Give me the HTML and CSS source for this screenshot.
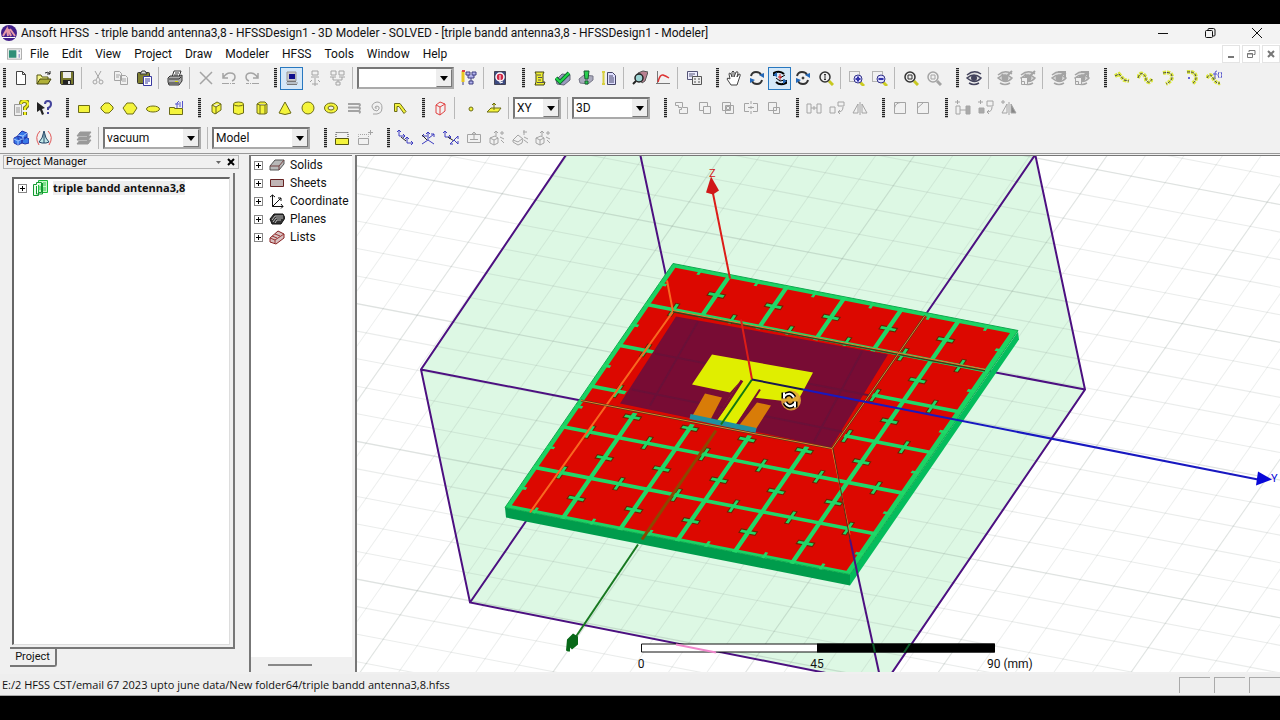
FILE: index.html
```html
<!DOCTYPE html>
<html lang="en">
<head>
<meta charset="utf-8">
<title>Ansoft HFSS - triple bandd antenna3,8</title>
<link rel="stylesheet" href="styles.css">
</head>
<body>
<svg class="defs" aria-hidden="true">
  <symbol id="swap" viewBox="0 0 16 16"><path d="M2 6q1-4 5-4 4 0 5 3M3 11q1 3 5 3t5-4" fill="none" stroke="currentColor" stroke-width="2"/><path d="M10 5l5-2v5zM6 10l-5 3V8z" fill="#2468b8" stroke="none"/></symbol>
  <symbol id="lens" viewBox="0 0 16 16"><path d="M11 11l4 4" stroke="#c8c820" stroke-width="3"/><circle cx="7" cy="7" r="5" fill="#eee" stroke="currentColor" stroke-width="1.5"/></symbol>
  <symbol id="eye" viewBox="0 0 16 16"><path d="M1 5q7-6 14-1M1 8q7-6 14 0-6 7-14 0z" fill="#ddd" stroke="currentColor" stroke-width="1.5"/><circle cx="8" cy="8" r="3" fill="currentColor"/><path d="M3 13q5 3 10 0" fill="none" stroke="currentColor" stroke-width="1.5"/></symbol>
  <symbol id="axis" viewBox="0 0 8 8"><path d="M2 0v6h6M0 2l2-2 2 2M6 4l2 2-2 2" fill="none" stroke="currentColor"/></symbol>
  <symbol id="cube" viewBox="0 0 16 16"><path d="M1 8l5-2 3 2v5l-4 2-4-2zM1 8l4 2v5M5 10l4-2M7 6V1M5 3l2-2 2 2M11 3h4M13 1v4M11 7l4 2M12 10l3 3" fill="none" stroke="currentColor"/></symbol>
</svg>
<div class="app">
  <header class="titlebar">
    <svg class="logo" viewBox="0 0 18 18"><circle cx="9" cy="9" r="8" fill="#42208a"/><path d="M3 12l4-7 1 7M8 5l3 7M10 5l5 7" fill="none" stroke="#e89aa8" stroke-width="2"/><path d="M2 13.500h13" stroke="#fff"/></svg>
    <h1>Ansoft HFSS&nbsp; - triple bandd antenna3,8 - HFSSDesign1 - 3D Modeler - SOLVED - [triple bandd antenna3,8 - HFSSDesign1 - Modeler]</h1>
    <div class="winbtns">
      <button aria-label="Minimize"><svg viewBox="0 0 12 12"><path d="M1 6.500h10"/></svg></button>
      <button aria-label="Restore"><svg viewBox="0 0 12 12"><rect x="1.500" y="3.500" width="7" height="7" rx="1"/><path d="M4 3.500V2.500q0-1 1-1h4.500q1.500 0 1.500 1.500V8q0 1-1 1H9"/></svg></button>
      <button aria-label="Close"><svg viewBox="0 0 12 12"><path d="M1 1l10 10M11 1L1 11"/></svg></button>
    </div>
  </header>
  <nav class="menubar">
    <svg class="docicon" viewBox="0 0 16 14"><rect x=".5" y="1.500" width="15" height="11" fill="#f4f4f4" stroke="#aaa"/><rect x="2" y="3" width="8" height="8" fill="#2f8f78"/><path d="M13 3v2M13 7v4" stroke="#7777bb"/></svg>
    <button>File</button><button>Edit</button><button>View</button><button>Project</button><button>Draw</button><button>Modeler</button><button>HFSS</button><button>Tools</button><button>Window</button><button>Help</button>
    <div class="mdibtns">
      <button aria-label="Minimize document"><svg viewBox="0 0 10 10"><path d="M2 8h6" stroke-width="2"/></svg></button>
      <button aria-label="Restore document"><svg viewBox="0 0 10 10"><path d="M3 3V1.500h6v4H7.500M1.500 4.500h5v4h-5zM1 5h6"/></svg></button>
      <button aria-label="Close document"><svg viewBox="0 0 10 10"><path d="M2 2l6 6M8 2L2 8" stroke-width="2"/></svg></button>
    </div>
  </nav>

  <div class="toolbars">
    <div class="row">
      <i class="grip first"></i>
      <button aria-label="New"><svg viewBox="0 0 16 16"><path d="M3.500 1.500h6l3 3v10h-9zM9.500 1.500v3h3" fill="#fff" stroke="#444"/></svg></button>
      <button aria-label="Open"><svg viewBox="0 0 16 16"><path d="M1 14V5h4l1 2h6v2" fill="#f4f48a" stroke="#555510"/><path d="M1 14l3-5h11l-3 5z" fill="#b0b038" stroke="#444410"/><path d="M9 3q3-2 5 1M14 1v3h-3" fill="none" stroke="#222"/></svg></button>
      <button aria-label="Save"><svg viewBox="0 0 16 16"><path d="M1.500 1.500h13v13h-12l-1-1z" fill="#77772c" stroke="#333"/><path d="M4 2h8v6H4z" fill="#eee"/><path d="M4 10h8v4H4z" fill="#222"/><path d="M9 11h2v3H9z" fill="#ddd"/></svg></button>
      <i class="sep"></i>
      <button aria-label="Cut"><svg class="gy" viewBox="0 0 16 16"><path d="M5 1l5 9M11 1L6 10"/><circle cx="5" cy="12" r="2"/><circle cx="11" cy="12" r="2"/></svg></button>
      <button aria-label="Copy"><svg class="gy" viewBox="0 0 16 16"><path d="M1.500 1.500h5l2 2v7h-7zM7.500 5.500h5l2 2v7h-7zM3 5h4M3 7h3M9 9h4M9 11h4"/></svg></button>
      <button aria-label="Paste"><svg viewBox="0 0 16 16"><rect x="1.500" y="2.500" width="12" height="11" rx="1" fill="#808030" stroke="#333"/><path d="M4 4l2-3h3l2 3z" fill="#ddd" stroke="#333"/><path d="M7.500 6.500h8v9h-8zM9 9h5M9 11h5M9 13h3" fill="#fff" stroke="#3838a0"/></svg></button>
      <i class="sep"></i>
      <button aria-label="Print"><svg viewBox="0 0 16 16"><path d="M5 7l2-6h7l-2 6M8 3h4M7 5h4" fill="#fff" stroke="#333"/><path d="M1 8l2-2h10l2-1v6l-3 4H2l-1-3z" fill="#aaa" stroke="#333"/><path d="M2 9h10l2-2M2 13h10" fill="none" stroke="#333"/><path d="M8 11.500h3" stroke="#dd0"/></svg></button>
      <i class="sep"></i>
      <button aria-label="Delete"><svg class="gy" viewBox="0 0 16 16"><path d="M2 2l12 12M14 2L2 14" stroke-width="1.500"/></svg></button>
      <button aria-label="Undo"><svg class="gy" viewBox="0 0 16 16"><path d="M2 8q3-5 7-5 5 0 5 4 0 3-3 4M2 3v5h5" stroke-width="1.500"/><path d="M1 13.500h13" stroke-dasharray="7 1 1 1"/></svg></button>
      <button aria-label="Redo"><svg class="gy" viewBox="0 0 16 16"><path d="M14 8q-3-5-7-5-5 0-5 4 0 3 3 4M14 3v5H9" stroke-width="1.500"/><path d="M15 13.500H2" stroke-dasharray="7 1 1 1"/></svg></button>
      <i class="grip"></i>
      <button class="on" aria-label="Local machine"><svg viewBox="0 0 16 16"><path d="M3 2h9v9H3zM2 13h12" fill="#ccc" stroke="#999"/><path d="M5 4h6v5H5z" fill="#10108c"/><path d="M3 11.500h9M3 14.500h10" stroke="#777"/></svg></button>
      <button aria-label="Remote machine"><svg class="gy" viewBox="0 0 16 16"><path d="M5 1h6v4H5zM4 7h8M8 8v4M5 10l-2 2M11 10l2 2M5 14h6M8 12v4"/></svg></button>
      <button aria-label="Distributed"><svg class="gy" viewBox="0 0 16 16"><path d="M1 1h5v4H1zM9 1h5v4H9zM0 7h6M9 7h6M3 7v3h9V7M8 10v2M6 12h4v3H6z"/></svg></button>
      <i class="sep"></i>
      <label class="combo w97"><select aria-label="Analysis configuration"><option></option></select><span class="arrow"></span></label>
      <button aria-label="Edit configuration"><svg viewBox="0 0 16 16"><path d="M2 1v11" stroke="#e8c820" stroke-width="3"/><path d="M1 1h3" stroke="#d44" stroke-width="2"/><path d="M2 12v3M5 2h4v3H5zM11 2h4v3h-4zM7 5v3h6V5M10 8v3M8 11h4v3H8z" fill="#b4b4ee" stroke="#3c3c80"/></svg></button>
      <i class="sep"></i>
      <button aria-label="Queue"><svg viewBox="0 0 16 16"><path d="M2.500 1.500h11v13h-11z" fill="#3c4a80" stroke="#445"/><circle cx="8" cy="7" r="4" fill="#d02848" stroke="#fff" stroke-width="1.500"/><path d="M8 5v8l3-1" stroke="#fff" fill="none"/></svg></button>
      <i class="grip"></i>
      <button aria-label="Setup"><svg viewBox="0 0 16 16"><path d="M3 2h9l-1 2v8h2l-1 3H3l1-3V4z" fill="#f0f030" stroke="#444410"/><path d="M5 5h4M6 7.500h4M6 10h3M5 12.500h7" stroke="#555"/></svg></button>
      <button aria-label="Validate"><svg viewBox="0 0 16 16"><path d="M1 10l6-6 8 1v5l-6 5-7-1z" fill="#9a9ac0" stroke="#667"/><path d="M1 8l4 4 9-9" fill="none" stroke="#163" stroke-width="4"/><path d="M1 8l4 4 9-9" fill="none" stroke="#20d848" stroke-width="2"/></svg></button>
      <button aria-label="Analyze"><svg viewBox="0 0 16 16"><path d="M1 9l5-4 9 1v4l-5 4-8-1z" fill="#aaaabc" stroke="#778"/><path d="M6 1h5l-1 8H7zM7 11h3v3H7z" fill="#28d050" stroke="#185c30"/></svg></button>
      <button aria-label="Solution data"><svg viewBox="0 0 16 16"><path d="M1 2h3M2.500 2v12M1 14h3" fill="none" stroke="#d8d040" stroke-width="2"/><path d="M6.500 2.500h5l3 3v9h-8zM8 6h4M8 8h5M8 10h5M8 12h5" fill="#ddf" stroke="#446"/></svg></button>
      <i class="sep"></i>
      <button aria-label="Fields"><svg viewBox="0 0 16 16"><path d="M6 3l5-2 5 1-3 9-3 2z" fill="#b88090" stroke="#555"/><circle cx="7" cy="8" r="4" fill="#9cd4d4" stroke="#222" stroke-width="1.500"/><path d="M4 11l-3 3" stroke="#222" stroke-width="2"/></svg></button>
      <button aria-label="Plot"><svg viewBox="0 0 16 16"><path d="M2.500 1v13M1 13.500h14" stroke="#777"/><path d="M3 12q2-8 5-7t6 3" fill="none" stroke="#d33" stroke-width="1.500"/></svg></button>
      <i class="sep"></i>
      <button aria-label="Reports"><svg viewBox="0 0 16 16"><path d="M1.500 1.500h10v8h-10zM3 4h6M3 6h4" fill="#eef" stroke="#557"/><path d="M6.500 6.500h9v8h-9zM8 9h2M12 9h2M8 12h2M12 12h2" fill="#eee" stroke="#555"/></svg></button>
      <i class="grip"></i>
      <button aria-label="Pan"><svg viewBox="0 0 16 16"><path d="M5 15L1 9q0-2 3 0L3 4q0-2 2 0l1 3V2q1-2 2 0v5l2-5q2-1 2 1l-1 4 2-3q2 0 1 2l-3 9z" fill="#fff" stroke="#444"/></svg></button>
      <button aria-label="Rotate"><svg class="dk"><use href="#swap"/></svg></button>
      <button class="on" aria-label="Rotate around axis"><svg class="bk" viewBox="0 0 16 16"><path d="M2 6V3q6-3 10 1M14 10v3q-6 3-10-1" fill="none" stroke="#000" stroke-width="2"/><path d="M4 8l4 3 5-1M8 8l5-3" stroke="#000" fill="none"/><path d="M8 4v6M6 7h4" stroke="#d22"/><path d="M1 5l4-3v5zM15 11l-4 3V9z" fill="#2468b8"/></svg></button>
      <button aria-label="Spin"><svg class="dk" viewBox="0 0 16 16"><use href="#swap"/><circle cx="8" cy="8" r="1" fill="#333"/></svg></button>
      <button aria-label="Zoom"><svg class="dk" viewBox="0 0 16 16"><use href="#lens"/><path d="M7 4v6M6 5l1-1 1 1M6 9l1 1 1-1"/></svg></button>
      <i class="sep"></i>
      <button aria-label="Zoom in"><svg viewBox="0 0 16 16"><path d="M.5 1.500h10v10H.5z" fill="none" stroke="#777" stroke-dasharray="1 1"/><path d="M11 12l4 4" stroke="#cc2" stroke-width="3"/><circle cx="9" cy="9" r="4" fill="#ddf" stroke="#338"/><path d="M6.500 9h5M9 6.500v5" stroke="#33a" stroke-width="2"/></svg></button>
      <button aria-label="Zoom out"><svg viewBox="0 0 16 16"><path d="M.5 1.500h10v10H.5z" fill="none" stroke="#777" stroke-dasharray="1 1"/><path d="M11 12l4 4" stroke="#cc2" stroke-width="3"/><circle cx="9" cy="9" r="4" fill="#ddf" stroke="#338"/><path d="M6.500 9h5" stroke="#33a" stroke-width="2"/></svg></button>
      <i class="sep"></i>
      <button aria-label="Fit all"><svg class="dk" viewBox="0 0 16 16"><use href="#lens"/><path d="M5 5h4v4H5z"/></svg></button>
      <button aria-label="Fit selection"><svg class="gy" viewBox="0 0 16 16"><path d="M11 11l4 4" stroke-width="3"/><circle cx="7" cy="7" r="5" stroke-width="1.500"/><path d="M5 5h4v4H5z"/></svg></button>
      <i class="grip"></i>
      <button aria-label="Visibility"><svg class="nv"><use href="#eye"/></svg></button>
      <i class="sep"></i>
      <button aria-label="Hide selection"><svg class="gy" viewBox="0 0 16 16"><use href="#eye"/><path d="M5 4l3 4 7-7" stroke-width="2"/></svg></button>
      <button aria-label="Hide in view"><svg class="gy" viewBox="0 0 16 16"><use href="#eye"/><path d="M5 4l3 4 7-7" stroke-width="2"/><path d="M1.500 7.500h6v7h-6zM1.500 11.500h3v3" fill="#eee"/></svg></button>
      <i class="sep"></i>
      <button aria-label="Show selection"><svg class="gy" viewBox="0 0 16 16"><use href="#eye"/><path d="M7 2h7v5M14 2L9 6" stroke-width="2"/></svg></button>
      <button aria-label="Show in view"><svg class="gy" viewBox="0 0 16 16"><use href="#eye"/><path d="M7 2h7v5M14 2L9 6" stroke-width="2"/><path d="M1.500 7.500h6v7h-6zM1.500 11.500h3v3" fill="#eee"/></svg></button>
      <i class="grip"></i>
      <button aria-label="Line"><svg class="crv" viewBox="0 0 16 16"><path d="M1 6l4-2 5 6 5 1" class="y"/><path d="M1 6l4-2 5 6 5 1"/></svg></button>
      <button aria-label="Spline"><svg class="crv" viewBox="0 0 16 16"><path d="M1 8q2-6 5-4t3 6q3 5 6-1" class="y"/><path d="M1 8q2-6 5-4t3 6q3 5 6-1"/></svg></button>
      <button aria-label="Three-point arc"><svg class="crv" viewBox="0 0 16 16"><path d="M3 3q9-2 9 4 0 4-6 7" class="y"/><path d="M3 3q9-2 9 4 0 4-6 7"/></svg></button>
      <button aria-label="Center-point arc"><svg class="crv" viewBox="0 0 16 16"><path d="M4 2q9-1 9 6 0 3-4 6" class="y"/><path d="M4 2q9-1 9 6 0 3-4 6"/><circle cx="6" cy="8" r="1" fill="#33c" stroke="none"/></svg></button>
      <button aria-label="Equation curve"><svg class="crv" viewBox="0 0 16 16"><path d="M1 8q3-6 6 0t7 5" class="y"/><path d="M1 8q3-6 6 0t7 5"/><path class="fx" d="M9 9V3q0-2 2-2M7 4h4M13 2q-2 3 0 6M15 2q2 3 0 6"/></svg></button>
    </div>

    <div class="row">
      <i class="grip first"></i>
      <button aria-label="Help topics"><svg viewBox="0 0 16 16"><path d="M1.500 4.500h7v11h-7zM3 8h4M3 10h4M3 12h4" fill="#eee" stroke="#999"/><path d="M8 4q0-3 3-3 4 0 4 3 0 2-3 4v2M12 12v3" fill="none" stroke="#777718" stroke-width="4"/><path d="M8 4q0-3 3-3 4 0 4 3 0 2-3 4v2M12 12v3" fill="none" stroke="#f0f020" stroke-width="2"/></svg></button>
      <button aria-label="Context help"><svg viewBox="0 0 16 16"><path d="M1 2l8 6-3 1 2 5-2 1-2-5-3 2z" fill="#222"/><path d="M9 4q0-3 3-3t3 3-3 4v2M12 12v2" fill="none" stroke="#44449c" stroke-width="2"/></svg></button>
      <i class="grip"></i>
      <button aria-label="Rectangle"><svg class="sh" viewBox="0 0 16 16"><path d="M2.500 5.500h11v7h-11z"/></svg></button>
      <button aria-label="Circle"><svg class="sh" viewBox="0 0 16 16"><path d="M6 3h4l4 4v2l-4 4H6L2 9V7z"/></svg></button>
      <button aria-label="Polygon"><svg class="sh" viewBox="0 0 16 16"><path d="M5 3h6l4 5-4 6H5L1 8z"/></svg></button>
      <button aria-label="Ellipse"><svg class="sh" viewBox="0 0 16 16"><ellipse cx="8" cy="9" rx="6.500" ry="3"/></svg></button>
      <button aria-label="Equation surface"><svg class="sh" viewBox="0 0 16 16"><path d="M1.500 7.500h5v1h8v6h-13z"/><path d="M9 8V3l2-2M7 4h4M12 2v5M14.500 1v7" stroke="#55c" fill="none"/></svg></button>
      <i class="grip"></i>
      <button aria-label="Box"><svg class="sh" viewBox="0 0 16 16"><path d="M4 5l5-3 4 2v6l-6 4-3-2zM4 5l4 2 5-3M8 7v7"/></svg></button>
      <button aria-label="Cylinder"><svg class="sh" viewBox="0 0 16 16"><path d="M2.500 4v9q5 3 10 0V4"/><ellipse cx="7.500" cy="4" rx="5" ry="2"/></svg></button>
      <button aria-label="Regular polyhedron"><svg class="sh" viewBox="0 0 16 16"><path d="M3 4l3-2h5l2 2v9l-2 1H5l-2-1zM3 4l3 1h5l2-1M6 5v9M11 5v9"/></svg></button>
      <button aria-label="Cone"><svg class="sh" viewBox="0 0 16 16"><path d="M8 2l6 11q-6 3-12 0z"/></svg></button>
      <button aria-label="Sphere"><svg class="sh" viewBox="0 0 16 16"><circle cx="8" cy="8" r="6"/></svg></button>
      <button aria-label="Torus"><svg class="sh" viewBox="0 0 16 16"><ellipse cx="8" cy="8" rx="6.500" ry="5"/><ellipse cx="8" cy="8" rx="3" ry="2" fill="#eee"/></svg></button>
      <button aria-label="Helix"><svg class="gy" viewBox="0 0 16 16"><path d="M2 4h11q2 1 0 2M2 7.500h11q2 1 0 2M2 11h11q2 1 0 2" stroke-width="2"/></svg></button>
      <button aria-label="Spiral"><svg class="gy" viewBox="0 0 16 16"><path d="M4 14q9 1 9-6 0-6-5-6-5 1-5 5 1 4 5 4 3-2 2-4-2-2-4 0 0 2 2 1"/></svg></button>
      <button aria-label="Bondwire"><svg class="sh" viewBox="0 0 16 16"><path d="M2.500 3.500H8l6 8-2 2-5-7H5v5H2.500z"/></svg></button>
      <i class="grip"></i>
      <button aria-label="Region"><svg viewBox="0 0 16 16"><path d="M4 5l4-3 5 2v7l-5 4-4-2zM4 5l4 2 5-3M8 7v8" fill="none" stroke="#e04040"/></svg></button>
      <i class="sep"></i>
      <button aria-label="Point"><svg class="sh" viewBox="0 0 16 16"><circle cx="8" cy="9" r="2"/></svg></button>
      <button aria-label="Plane"><svg class="sh" viewBox="0 0 16 16"><path d="M1 12l4-4h10l-3 4zM8 10V3M6 5l2-2 2 2"/></svg></button>
      <i class="sep"></i>
      <label class="combo w48"><select aria-label="Drawing plane"><option>XY</option></select><span class="arrow"></span></label>
      <i class="sep"></i>
      <label class="combo w78"><select aria-label="Movement mode"><option>3D</option></select><span class="arrow"></span></label>
      <i class="grip"></i>
      <button aria-label="Unite"><svg class="gy" viewBox="0 0 16 16"><path d="M1.500 2.500h7v5h5v6h-8v-4h2v-2h-3v-2h-3z"/></svg></button>
      <button aria-label="Subtract"><svg class="gy" viewBox="0 0 16 16"><path d="M6.500 10.500h-4v-8h8v4M6.500 6.500h7v7h-7z"/></svg></button>
      <button aria-label="Intersect"><svg class="gy" viewBox="0 0 16 16"><path d="M2.500 2.500h8v8h-8zM5.500 5.500h8v8h-8zM6.500 6.500h3v3h-3z"/></svg></button>
      <button aria-label="Split"><svg class="gy" viewBox="0 0 16 16"><path d="M6 3.500H1.500v8H6M10 3.500h4.500v8H10M8 1v3M8 6v3M8 11v3M5 7.500h6"/></svg></button>
      <button aria-label="Imprint"><svg class="gy" viewBox="0 0 16 16"><path d="M2.500 2.500h8v8h-8zM7.500 7.500h6v6h-6z"/></svg></button>
      <i class="grip"></i>
      <button aria-label="Move"><svg class="gy" viewBox="0 0 16 16"><path d="M1 4h4v9H1zM11 4h4v9h-4zM5 8h6M8 6v4"/></svg></button>
      <button aria-label="Turn"><svg class="gy" viewBox="0 0 16 16"><path d="M1 7h5v6H1zM9 2h6v4H9zM14 7q0 5-5 5M11 10l-2 2 2 2"/></svg></button>
      <button aria-label="Mirror"><svg class="gy" viewBox="0 0 16 16"><path d="M1 13l5-9v9zM15 13l-5-9v9zM8 2v13"/></svg></button>
      <i class="grip"></i>
      <button aria-label="Fillet"><svg class="gy" viewBox="0 0 16 16"><path d="M2.500 13.500v-11h11v11zM2.500 8q1-5 6-5.500"/></svg></button>
      <button aria-label="Chamfer"><svg class="gy" viewBox="0 0 16 16"><path d="M2.500 13.500v-11h11v11zM2.500 8l6-5.500"/></svg></button>
      <i class="grip"></i>
      <button aria-label="Duplicate along line"><svg class="gy" viewBox="0 0 16 16"><path d="M1 6h4v8H1zM5 10h6M0 2h5M2.500 0v4"/><path d="M11 6h4v8h-4z" fill="#aaa"/></svg></button>
      <button aria-label="Duplicate around axis"><svg class="gy" viewBox="0 0 16 16"><path d="M9 1h6v5H9zM14 7q0 5-5 5M11 10l-2 2 2 2M0 2h5M2.500 0v4"/><path d="M1 8h5v5H1z" fill="#aaa"/></svg></button>
      <button aria-label="Duplicate mirror"><svg class="gy" viewBox="0 0 16 16"><path d="M1 13l5-9v9zM8 2v13M0 2h4M2 0v4"/><path d="M15 13l-5-9v9z" fill="#888"/></svg></button>
    </div>

    <div class="row">
      <i class="grip first"></i>
      <button aria-label="Mesh"><svg viewBox="0 0 16 16"><path d="M5 5l4-4 5 2v4l-4 3-5-1zM1 8l4-2 4 2v5l-4 2-4-2zM9 9l4-2 3 2v4l-4 1-3-1z" fill="#3878e8" stroke="#2030a8"/><path d="M1 9l4 2 4-2M5 11v4M5 5l5 1 4-3M10 6v4" fill="none" stroke="#a4c8ff"/></svg></button>
      <button aria-label="Radiation"><svg viewBox="0 0 16 16"><path d="M8 1l2 7 3 4-3 1H6l-3-1 3-4z" fill="#c0e8e8" stroke="#246"/><path d="M8 4v9" stroke="#246"/><path d="M4 1Q-2 7 3 15M12 1q6 6 1 14" fill="none" stroke="#e05858"/></svg></button>
      <i class="grip"></i>
      <button aria-label="Layers"><svg viewBox="0 0 16 16"><path d="M4 2h11l-3 4H1zM4 6h11l-3 4H1zM4 10h11l-3 4H1z" fill="#999" stroke="#999"/><path d="M2 6.500h9M2 10.500h9" stroke="#bbb"/></svg></button>
      <i class="sep"></i>
      <label class="combo w98"><select aria-label="Material"><option>vacuum</option></select><span class="arrow"></span></label>
      <i class="sep"></i>
      <label class="combo w98"><select aria-label="Model type"><option>Model</option></select><span class="arrow"></span></label>
      <i class="grip"></i>
      <button aria-label="Cover lines"><svg viewBox="0 0 16 16"><path d="M2 7V2.500h12V7" fill="none" stroke="#333" stroke-dasharray="1 1"/><path d="M1.500 8.500h13v6h-13z" fill="#f4f43c" stroke="#555510"/></svg></button>
      <button aria-label="Uncover faces"><svg class="gy" viewBox="0 0 16 16"><path d="M1.500 8.500h10v6h-10zM13.500 0v5M11 2.500h5"/><path d="M1.500 7V4.500h10V8" stroke-dasharray="1 1"/></svg></button>
      <i class="grip"></i>
      <button aria-label="Relative CS offset"><svg class="cs" viewBox="0 0 16 16"><use href="#axis" width="8" height="8"/><use href="#axis" x="8" y="7" width="8" height="8"/><path d="M4 7l5 4" stroke="#222"/></svg></button>
      <button aria-label="Relative CS rotated"><svg class="cs" viewBox="0 0 16 16"><path d="M8 2v8l6 4M8 10l-6 4M6 4l2-2 2 2M2 6h5M2 6l2-2M9 8l5-4M14 7V4h-3" fill="none" stroke="currentColor"/><path d="M2 5l5 5" stroke="#222"/></svg></button>
      <button aria-label="Relative CS both"><svg class="cs" viewBox="0 0 16 16"><use href="#axis" y="1" width="8" height="8"/><path d="M5 7l6 4" stroke="#222"/><path d="M11 10l4-4v3M11 10l4 4v-3M11 10l-4 4h3" fill="none" stroke="currentColor"/></svg></button>
      <button aria-label="Face CS"><svg class="gy" viewBox="0 0 16 16"><path d="M1.500 4.500h13v8h-13zM4 9.500h8M8 9V2M6 4l2-2 2 2"/></svg></button>
      <button aria-label="Object CS offset"><svg class="gy"><use href="#cube"/></svg></button>
      <button aria-label="Object CS rotated"><svg class="gy" viewBox="0 0 16 16"><path d="M1 10l5-5 5 4-1 4-4 2-5-3zM1 10l5 2 4-3M11 2h4M12 0v5M12 7l4 2M12 10l4 3"/></svg></button>
      <button aria-label="Object CS both"><svg class="gy"><use href="#cube"/></svg></button>
    </div>
  </div>

  <main class="work">
    <section class="dock">
      <div class="dockhead"><h2>Project Manager</h2><button aria-label="Dock options"><svg viewBox="0 0 8 8"><path d="M1 3h5L3.500 6z" fill="#666"/></svg></button><button aria-label="Close panel"><svg viewBox="0 0 8 8"><path d="M1 1l6 6M7 1L1 7" stroke="#000" stroke-width="2"/></svg></button></div>
      <div class="sunk"><div class="paper">
        <div class="node proj"><button class="plus" aria-label="Expand"></button><svg viewBox="0 0 16 16"><path d="M6.500.5h9v12h-9z" fill="#c8f8c8" stroke="#18b838"/><path d="M1.500 4.500h3v-2h5v10h-3v3h-5zM4.500 6v8h6V3" fill="#eaffea" stroke="#129830"/><path d="M11 3h3M11 5h3M11 8h3M11 10h3M6 7h3M6 9h3" stroke="#30c850"/></svg><b>triple bandd antenna3,8</b></div>
      </div></div>
      <button class="tab">Project</button>
    </section>
    <section class="tree">
      <div class="nodes">
        <div class="node"><button class="plus" aria-label="Expand Solids"></button><svg viewBox="0 0 16 16"><path d="M1 9l5-6h9v4l-5 6H1z" fill="#b8b8b8" stroke="#555"/><path d="M1 9h9l5-6M10 9v4" fill="none" stroke="#744"/></svg><span>Solids</span></div>
        <div class="node"><button class="plus" aria-label="Expand Sheets"></button><svg viewBox="0 0 16 16"><path d="M1.500 4.500h13v7h-13z" fill="#c0b4b4" stroke="#622"/></svg><span>Sheets</span></div>
        <div class="node"><button class="plus" aria-label="Expand Coordinate"></button><svg viewBox="0 0 16 16"><path d="M3.500 2v11.500H14M3.500 13.500L12 5M1 4l2.500-2L6 4M12 11l2 2.500-2 2M9 5h3v3" fill="none" stroke="#111"/></svg><span>Coordinate</span></div>
        <div class="node"><button class="plus" aria-label="Expand Planes"></button><svg viewBox="0 0 16 16"><path d="M1 8l4-5h9l2 4-4 6H3z" fill="#333" stroke="#111"/><path d="M3 9l3-4h8M4 11l3-4h7M6 12l2-3h4" fill="none" stroke="#bbb"/></svg><span>Planes</span></div>
        <div class="node"><button class="plus" aria-label="Expand Lists"></button><svg viewBox="0 0 16 16"><path d="M1 9l8-7 6 3v4l-8 6-6-2z" fill="#d8c0c0" stroke="#822"/><path d="M1 9l5 2 9-6M6 11v3M3 7l5 2M6 5l5 2" fill="none" stroke="#933"/></svg><span>Lists</span></div>
      </div>
      <div class="hscroll"><i></i></div>
    </section>
    <section class="view">
      <svg viewBox="357 156 923 517" preserveAspectRatio="xMidYMid slice" role="img" aria-label="Antenna model">
        <clipPath id="board"><path d="M0 0H6V6H0z"/></clipPath>
        <rect x="0" y="0" width="1600" height="1000" fill="#fff"/>
        <path d="M566 154L421 370l49 233 414 82 201-295-51-236z" fill="#ddf8e4"/>
        <g transform="matrix(34 6.500 -17 24.300 1012 291)" fill="none" stroke="#7a8a80">
          <path d="M-30 0H30" stroke-width="60" stroke-dasharray=".03 .97" opacity=".14"/>
          <path d="M0-30V30" stroke-width="60" stroke-dasharray=".04 .96" opacity=".16"/>
          <path d="M-30 0H30" stroke-width="60" stroke-dasharray=".04 4.960" opacity=".1"/>
          <path d="M0-30V30" stroke-width="60" stroke-dasharray=".05 4.950" opacity=".1"/>
        </g>
        <path d="M567 154L421 370l49 233 414 82 201-295-50-236M640 154l27 127M421 370l160 31M470 603l62-90M1036 154L925 316M985 371l100 19" fill="none" stroke="#4c1080" stroke-width="2"/>
        <path d="M638 545l-64 95" stroke="#187820" stroke-width="2"/>
        <path d="M566 651l1-11 6-6 5 3v8l-6 5-2-2v4h-2z" fill="#086818"/>
        <path d="M505 508l345 67v11l-344-68z" fill="#009c4c"/>
        <path d="M850 575l168-243 1 8-169 246z" fill="#04bc5c"/>
        <path d="M673 264l345 67-168 244-345-67z" fill="#1cd464" stroke="#10a850"/>
        <g transform="matrix(57.300 11.200 -28 40.700 673 264)" fill="none" clip-path="url(#board)">
          <path d="M.08 .08H5.920V5.920H.08z" fill="#dc0800"/>
          <g stroke="#6c2400">
            <path d="M1 0V6M2 0V6M3 0V6M4 0V6M5 0V6" stroke-width=".3" stroke-dasharray=".11 .89" stroke-dashoffset="-.445"/>
            <path d="M0 1H6M0 2H6M0 3H6M0 4H6M0 5H6" stroke-width=".32" stroke-dasharray=".09 .91" stroke-dashoffset="-.455"/>
          </g>
          <g stroke="#20d868">
            <path d="M1 0V6M2 0V6M3 0V6M4 0V6M5 0V6M0 1H6M0 2H6M0 3H6M0 4H6M0 5H6" stroke-width=".08"/>
            <path d="M1 0V6M2 0V6M3 0V6M4 0V6M5 0V6M0 0V6M6 0V6" stroke-width=".26" stroke-dasharray=".06 .94" stroke-dashoffset="-.47"/>
            <path d="M0 1H6M0 2H6M0 3H6M0 4H6M0 5H6M0 0H6M0 6H6" stroke-width=".28" stroke-dasharray=".05 .95" stroke-dashoffset="-.475"/>
          </g>
          <path d="M.64 1.060H4.460V3.400H.64z" fill="#dc0800"/>
        </g>
        <path d="M676 317l212 38-57 93-211-44z" fill="#780c34"/>
        <path d="M698 322l-48 84M862 352l-48 90M655 354l215 42M632 390l210 42" stroke="#6a1038" stroke-width="2"/>
        <path d="M712 355l101 18-16 30-44-5 5-9-30 34-13-2 24-38-9 10-38-8z" fill="#e0ee00"/>
        <path d="M759 386l-17 28M742 381l-26 40" stroke="#780c34" stroke-width="3"/>
        <path d="M743 385l9-5 10 7-26 38-19-4z" fill="#e0ee00"/>
        <path d="M760 390l-23 35" stroke="#780c34" stroke-width="2"/>
        <path d="M705 394l17 4-12 23-18-4zM757 403l14 3-16 25-16-5z" fill="#d87c08"/>
        <path d="M690 417l66 14" stroke="#2090a0" stroke-width="5"/>
        <path d="M752 380l-31 45" stroke="#107810" stroke-width="2"/>
        <path d="M716 431l-74 109" stroke="#8c4800" stroke-width="3"/>
        <path d="M667 281l6 31-143 201" fill="none" stroke="#f86820" stroke-width="2"/>
        <path d="M673 312l312 59M925 316l-93 133-251-48" fill="none" stroke="#38401c" stroke-width="2"/>
        <path d="M673 311l312 59M925 316l-93 133-251-48M832 449l18 86" fill="none" stroke="#e88030"/>
        <path d="M833 449l17 91" fill="none" stroke="#503018"/>
        <path d="M850 540l29 133" fill="none" stroke="#4c1080" stroke-width="2"/>
        <path d="M752 380l-11-60M730 279l-18-90" stroke="#dc1c18" stroke-width="2"/>
        <path d="M711 177l8 14-6 4-7-2z" fill="#d01818"/>
        <path d="M752 380l51 10" stroke="#181850" stroke-width="2"/>
        <path d="M803 390l455 90" stroke="#1818c0" stroke-width="2"/>
        <path d="M1258 472l14 8-16 6z" fill="#0808d8"/>
        <text x="709" y="177" class="ax z">Z</text>
        <text x="1271" y="482" class="ax yy">Y</text>
        <circle cx="791" cy="401" r="10" fill="#e0a038" opacity=".9"/>
        <path d="M784 399v-6M784 397q6-6 10 1M795 402v6M795 404q-6 6-10-1" fill="none" stroke="#000" stroke-width="5"/>
        <path d="M784 399v-6M784 397q6-6 10 1M795 402v6M795 404q-6 6-10-1" fill="none" stroke="#fff" stroke-width="2"/>
        <path d="M641.500 644.500h353v8h-353z" fill="#fff" stroke="#111"/>
        <path d="M817 644h178v9H817z" fill="#000"/>
        <path d="M676 645l40 8" stroke="#f088cc" stroke-width="2"/>
        <path d="M873 644l2 9M910 644l-6 9" stroke="#0c5828" stroke-width="2"/>
        <g class="scale"><text x="641" y="668" text-anchor="middle">0</text><text x="817" y="668" text-anchor="middle">45</text><text x="987" y="668">90 (mm)</text></g>
      </svg>
    </section>
  </main>
  <footer class="status"><span>E:/2 HFSS CST/email 67 2023 upto june data/New folder64/triple bandd antenna3,8.hfss</span><i></i><i></i><i></i></footer>
</div>
</body>
</html>
```
FILE: styles.css
```css
* { box-sizing: border-box; }
body {
  margin: 0;
  min-height: 100vh;
  padding: 24px 0;
  display: flex;
  background: #000;
  color: #111;
  font: 12px/16px Roboto, "Noto Sans", sans-serif;
}
.defs { position: absolute; width: 0; height: 0; }
.app { flex: 1; min-width: 0; display: flex; flex-direction: column; background: #f0f0f0; }
button { padding: 0; border: 0; background: none; font: inherit; color: inherit; }
h1, h2 { margin: 0; font: inherit; white-space: nowrap; }
button svg { display: block; }

.titlebar { height: 20px; display: flex; align-items: center; gap: 3px; background: #f3f3f3; padding-bottom: 2px; }
.logo { width: 18px; height: 18px; }
.winbtns { margin-left: auto; display: flex; }
.winbtns button { width: 47px; height: 18px; display: grid; place-items: center; }
.winbtns svg { width: 12px; height: 12px; fill: none; stroke: #111; }

.menubar { height: 19px; display: flex; align-items: center; gap: 13px; background: #fff; padding-left: 7px; }
.docicon { width: 15px; height: 14px; margin-right: -5px; }
.mdibtns { margin-left: auto; display: flex; gap: 2px; }
.mdibtns button { width: 18px; height: 18px; display: grid; place-items: center; border: 1px solid #e4e4e4; }
.mdibtns svg { width: 10px; height: 10px; fill: none; stroke: #777; }

.toolbars { background: #f1f1f1; border-bottom: 1px solid #999; }
.row { height: 30px; display: flex; align-items: center; }
.row button { flex: none; width: 23px; height: 23px; display: grid; place-items: center; }
.row button svg { width: 16px; height: 16px; }
.row button.on { background: #d5e8f8; box-shadow: inset 0 0 0 1px #2878c0; }
.grip { flex: none; width: 17px; height: 20px; padding: 0 3px 0 11px; background: repeating-linear-gradient(#222 0 1px, #bbb 1px 2px) content-box; }
.grip.first { width: 9px; padding: 0 3px; }
.sep { flex: none; width: 8px; height: 22px; padding: 0 4px 0 3px; background: #b8b8b8 content-box; }
.gy { color: #a4a4a4; fill: none; stroke: currentColor; }
.dk { color: #333; fill: none; stroke: currentColor; }
.bk { color: #000; }
.nv { color: #44445c; }
.sh { fill: #f4f43c; stroke: #6c6c18; }
.cs { color: #3c3cc0; }
.crv { fill: none; stroke: #444; }
.crv path { stroke-dasharray: 3 1; }
.crv .y { stroke: #dce83c; stroke-width: 4; }
.crv .fx { stroke: #5555cc; stroke-dasharray: none; }

.combo { flex: none; height: 22px; display: grid; grid-template-columns: 1fr 16px; border: 2px solid #777; border-color: #777 #aaa #aaa #777; background: #fff; margin-right: 3px; }
.combo select { grid-area: 1 / 1 / 2 / 3; min-width: 0; width: 100%; border: 0; padding: 0 2px; background: none; appearance: none; font: inherit; color: #111; }
.arrow { grid-area: 1 / 2 / 2 / 3; pointer-events: none; background: #eee; border: 1px solid #aaa; border-color: #eee #777 #777 #eee; display: grid; place-items: center; }
.arrow::before { content: ""; border: 4px solid transparent; border-top: 5px solid #000; border-bottom: 0; }
.w97 { width: 97px; }
.w48 { width: 48px; }
.w78 { width: 78px; }
.w98 { width: 98px; }

.work { flex: 1; min-height: 0; display: flex; padding-top: 1px; }
.dock { width: 249px; flex: none; padding: 0 10px 7px 3px; display: flex; flex-direction: column; align-items: flex-start; }
.dockhead { align-self: stretch; height: 14px; display: flex; align-items: center; gap: 4px; padding: 0 3px 0 2px; border: 1px solid #b4b4b4; }
.dockhead h2 { flex: 1; font-size: 11px; line-height: 12px; }
.dockhead svg { width: 8px; height: 8px; }
.sunk { flex: 1; align-self: stretch; margin: 4px 4px 0 7px; padding: 4px 3px 2px 2px; border: solid #777; border-width: 0 2px 2px 0; display: flex; }
.paper { flex: 1; background: #fff; border: 1px solid #666; border-width: 2px 1px 1px 2px; border-right-color: #ddd; border-bottom-color: #ddd; padding: 0 4px; }
.node { display: flex; align-items: center; gap: 6px; height: 18px; }
.node svg { width: 16px; height: 16px; flex: none; }
.node b { font: bold 11px/14px "Open Sans", sans-serif; background: #eee; white-space: nowrap; }
.proj { gap: 5px; }
.plus { flex: none; width: 9px; height: 9px; border: 1px solid #888; background: linear-gradient(#000, #000) center / 5px 1px no-repeat, linear-gradient(#000, #000) center / 1px 5px no-repeat, #fff; }
.tab { width: 47px; height: 18px; margin-left: 7px; border: solid #777; border-width: 0 2px 2px 0; border-radius: 0 0 3px 0; font-size: 11px; }
.tree { flex: none; width: 103px; margin-right: 3px; border: solid #777; border-width: 1px 0 0 2px; display: flex; flex-direction: column; margin-bottom: 2px; }
.nodes { flex: 1; background: #fff; overflow: hidden; padding-left: 3px; }
.tree .node { gap: 5px; }
.tree .node svg { margin-left: 1px; }
.hscroll { height: 15px; padding: 7px 40px 0 17px; }
.hscroll i { display: block; height: 2px; background: #888; }
.view { flex: 1; min-width: 0; margin-bottom: 2px; border: solid #777; border-width: 1px 0 0 2px; position: relative; }
.view > svg { position: absolute; inset: 0; width: 100%; height: 100%; }
.ax { font: 11px Roboto, sans-serif; }
.z { fill: #d01818; }
.yy { fill: #0808d8; }
.scale { font: 12px Roboto, sans-serif; fill: #111; }

.status { height: 22px; display: flex; align-items: center; gap: 4px; padding-left: 2px; border-bottom: 1px solid #aaa; background: #eee; font: 11px/16px "Open Sans", sans-serif; }
.status span { flex: 1; }
.status i { width: 31px; height: 16px; border: solid #aaa; border-width: 1px 0 0 1px; }
```
